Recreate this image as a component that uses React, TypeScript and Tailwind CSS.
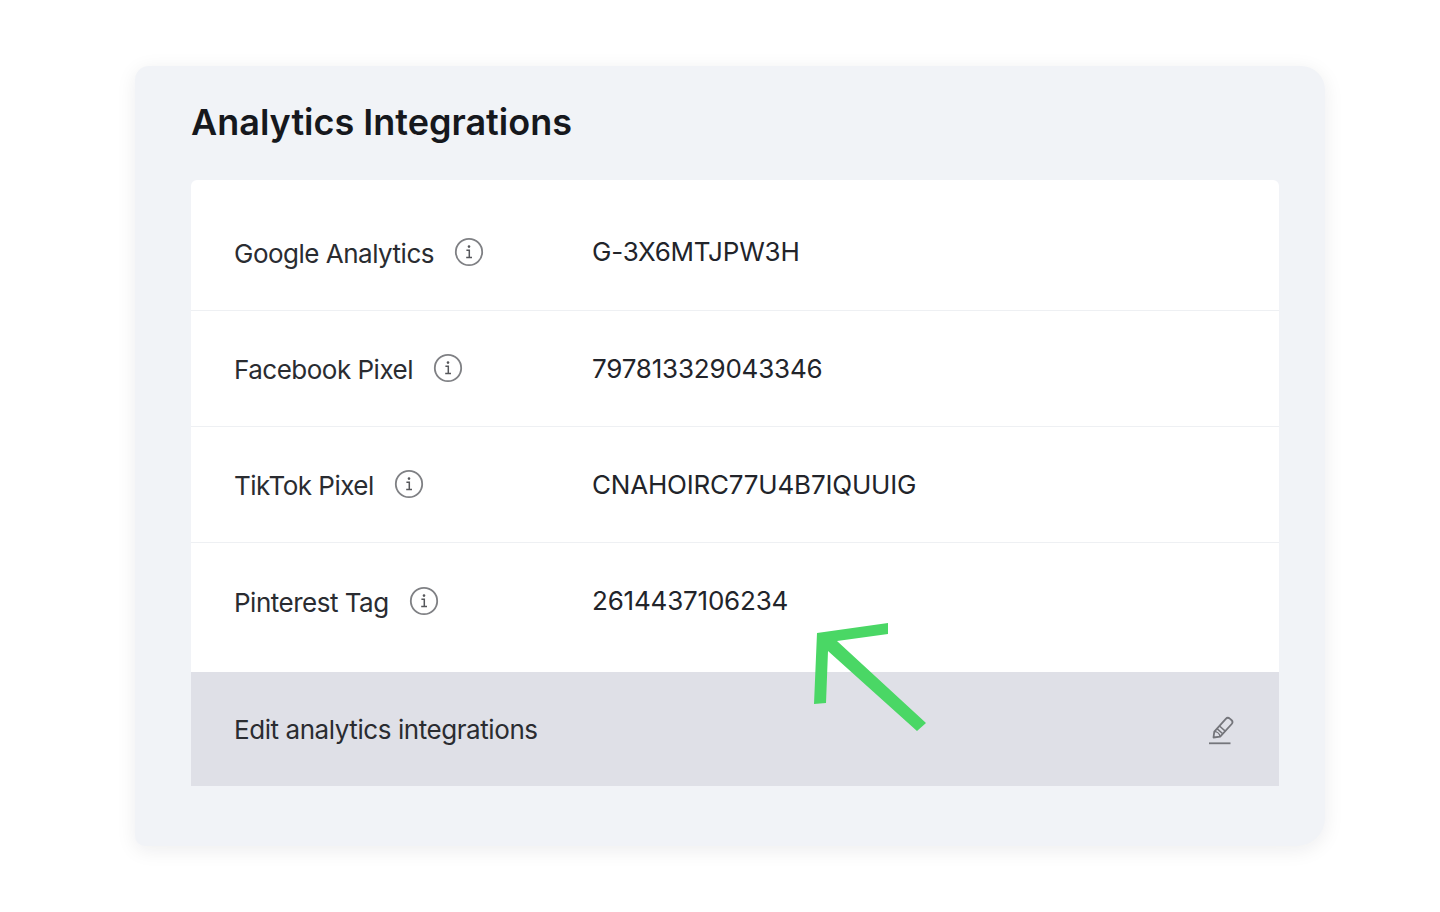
import React from 'react';

const rows = [
  { label: 'Google Analytics', value: 'G-3X6MTJPW3H', height: 'h-[131px]', pad: 'pt-[13px]' },
  { label: 'Facebook Pixel', value: '797813329043346', height: 'h-[116px]', pad: 'pb-[1px]' },
  { label: 'TikTok Pixel', value: 'CNAHOIRC77U4B7IQUUIG', height: 'h-[116px]', pad: 'pb-[1px]' },
  { label: 'Pinterest Tag', value: '2614437106234', height: 'h-[129px]', pad: 'pb-[14px]' },
];

const InfoIcon = () => (
  <svg width="30" height="30" viewBox="0 0 30 30" fill="none" className="shrink-0">
    <circle cx="15" cy="15" r="13.2" stroke="#7f8084" strokeWidth="1.8" />
    <circle cx="15" cy="9.6" r="1.3" fill="#55565a" />
    <path d="M12.4 13.2H15.3V20.2M12.2 20.4H18" stroke="#55565a" strokeWidth="1.5" />
  </svg>
);

const PencilIcon = () => (
  <svg width="28" height="30" viewBox="0 0 28 30" fill="none">
    <path
      d="M5.5 21.5 6.3 15.6 17.8 2.9C18.9 1.7 20.6 1.6 21.8 2.6L23.4 4C24.6 5.1 24.7 6.8 23.7 8L12.2 20.7 5.5 21.5Z"
      stroke="#74757b"
      strokeWidth="1.8"
      strokeLinejoin="round"
    />
    <path d="M6.3 15.6C8.8 15.6 11.6 17.6 12.2 20.7M9 12.6 15 18M11.5 10 17.5 15.4" stroke="#74757b" strokeWidth="1.5" />
    <path d="M1 27.3H22.5" stroke="#74757b" strokeWidth="1.8" />
  </svg>
);

export default function App() {
  return (
    <div className="min-h-[912px] bg-white pl-[135px] pt-[66px] font-['Inter',sans-serif]">
      <div className="relative h-[780px] w-[1190px] rounded-tl-[14px] rounded-tr-[24px] rounded-br-[28px] rounded-bl-[10px] bg-[#f1f3f7] pl-[56px] pr-[46px] shadow-[0_4px_20px_rgba(20,24,40,0.08)]">
        <h1 className="flex h-[114px] items-center pb-[2px] text-[36px] font-semibold text-[#16181d]">
          Analytics Integrations
        </h1>

        <div className="overflow-hidden rounded-t-[6px] bg-white">
          {rows.map((row, i) => (
            <div
              key={row.label}
              className={`flex items-center ${row.height} ${row.pad} pl-[43px] ${i < 3 ? 'border-b border-[#eef0f3]' : ''}`}
            >
              <div className="flex w-[358px] items-center gap-[20px]">
                <span className="pt-[3px] text-[26px] tracking-[-0.5px] text-[#2a2c31]">{row.label}</span>
                <InfoIcon />
              </div>
              <span className="text-[26px] tracking-[-0.2px] text-[#22242a]">{row.value}</span>
            </div>
          ))}

          <div className="flex h-[114px] items-center justify-between bg-[#dfe0e7] pl-[43px] pr-[43px]">
            <span className="text-[26px] tracking-[-0.43px] text-[#2a2c31]">Edit analytics integrations</span>
            <span className="pt-[4px]">
              <PencilIcon />
            </span>
          </div>
        </div>

        {/* green arrow annotation */}
        <svg width="120" height="115" viewBox="0 0 120 115" className="absolute left-[679px] top-[555px]">
          <path d="M3 12 74 2 74 13 23 20 112 102 103 110 14 30 12 82 0 83Z" fill="#4ad765" />
        </svg>
      </div>
    </div>
  );
}
